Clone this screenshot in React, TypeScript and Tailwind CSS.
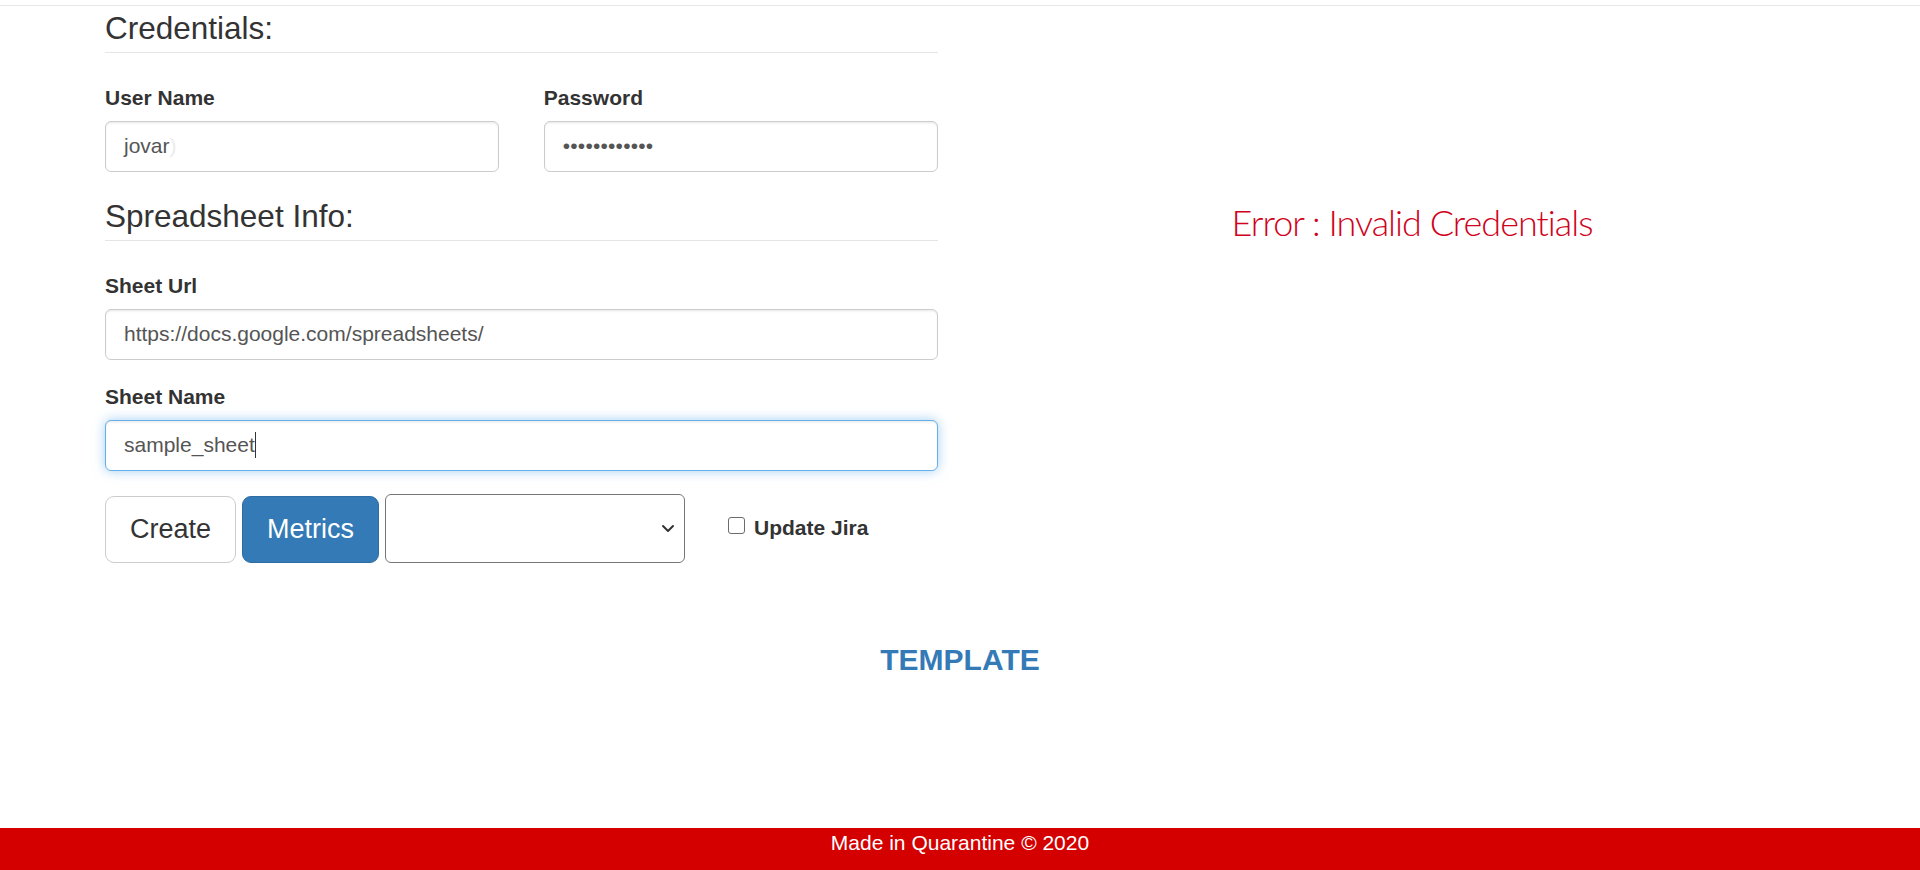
import React from "react";

function Label({ children }: { children: React.ReactNode }) {
  return (
    <div className="text-[21px] leading-[30px] font-bold text-[#333] mb-[7.5px]">{children}</div>
  );
}

function Field({ children, focus = false }: { children: React.ReactNode; focus?: boolean }) {
  return (
    <div
      className={
        "h-[51px] w-full rounded-[6px] border-[1.5px] bg-white px-[18px] flex items-center text-[21px] text-[#555] " +
        (focus
          ? "border-[#66afe9] shadow-[inset_0_1.5px_1.5px_rgba(0,0,0,0.075),0_0_12px_rgba(102,175,233,0.6)]"
          : "border-[#ccc] shadow-[inset_0_1.5px_1.5px_rgba(0,0,0,0.075)]")
      }
    >
      {children}
    </div>
  );
}

function Legend({ children }: { children: React.ReactNode }) {
  return (
    <div className="h-[47px] text-[31.5px] leading-[45px] text-[#333] border-b border-[#e5e5e5] mb-[30px]">
      {children}
    </div>
  );
}

export default function App() {
  return (
    <div className="h-screen flex flex-col bg-white font-['Liberation_Sans',Arial,sans-serif] overflow-hidden">
      <div className="h-[6px] border-b border-[#e7e7e7] shrink-0" />
      <div className="flex-1">
        <div className="mx-auto w-[1755px] px-[22.5px]">
          <div className="flex gap-[45px]">
            <div className="w-[832.5px] shrink-0">
              <Legend>Credentials:</Legend>
              <div className="flex gap-[45px] mb-[22.5px]">
                <div className="flex-1">
                  <Label>User Name</Label>
                  <Field>
                    <span>jovar</span>
                    <span className="text-[#ececec]">)</span>
                  </Field>
                </div>
                <div className="flex-1">
                  <Label>Password</Label>
                  <Field>
                    <span className="tracking-[0.2px]">••••••••••••</span>
                  </Field>
                </div>
              </div>
              <Legend>Spreadsheet Info:</Legend>
              <div className="mb-[22.5px]">
                <Label>Sheet Url</Label>
                <Field>https://docs.google.com/spreadsheets/</Field>
              </div>
              <div className="mb-[22.5px]">
                <Label>Sheet Name</Label>
                <Field focus>
                  <span>sample_sheet</span>
                  <span className="inline-block w-px h-[26px] bg-[#333]" />
                </Field>
              </div>
              <div className="flex items-start">
                <button className="mt-[3px] h-[67px] px-[24px] rounded-[9px] border-[1.5px] border-[#ccc] bg-white text-[27px] text-[#333]">
                  Create
                </button>
                <button className="mt-[3px] ml-[6px] h-[67px] px-[24px] rounded-[9px] border-[1.5px] border-[#2e6da4] bg-[#337ab7] text-[27px] text-white">
                  Metrics
                </button>
                <div className="ml-[6px] mt-[1px] h-[69px] w-[300px] rounded-[6px] border-[1.5px] border-[#767676] bg-white flex items-center justify-end pr-[9px]">
                  <svg width="14" height="9" viewBox="0 0 14 9" fill="none">
                    <path d="M2 2l5 5 5-5" stroke="#333" strokeWidth="2" strokeLinecap="round" strokeLinejoin="round" />
                  </svg>
                </div>
                <div className="ml-[43px] mt-[20px] flex items-start">
                  <div className="mt-[4px] w-[17px] h-[17px] rounded-[3px] border-[1.5px] border-[#6b6b6b] bg-white" />
                  <span className="ml-[9px] text-[21px] leading-[30px] font-bold text-[#333]">Update Jira</span>
                </div>
              </div>
            </div>
            <div className="w-[859px] shrink-0 text-center pt-[197px]">
              <div className="font-['Lato',sans-serif] font-light text-[36px] leading-[39.6px] tracking-[-1px] text-[#d0021b]">
                Error : Invalid Credentials
              </div>
            </div>
          </div>
          <div className="mt-[74px] text-center text-[30px] leading-[45px] font-bold text-[#337ab7]">TEMPLATE</div>
        </div>
      </div>
      <div className="h-[42px] shrink-0 bg-[#d40000] text-white text-center text-[21px] leading-[30px]">
        Made in Quarantine © 2020
      </div>
    </div>
  );
}
